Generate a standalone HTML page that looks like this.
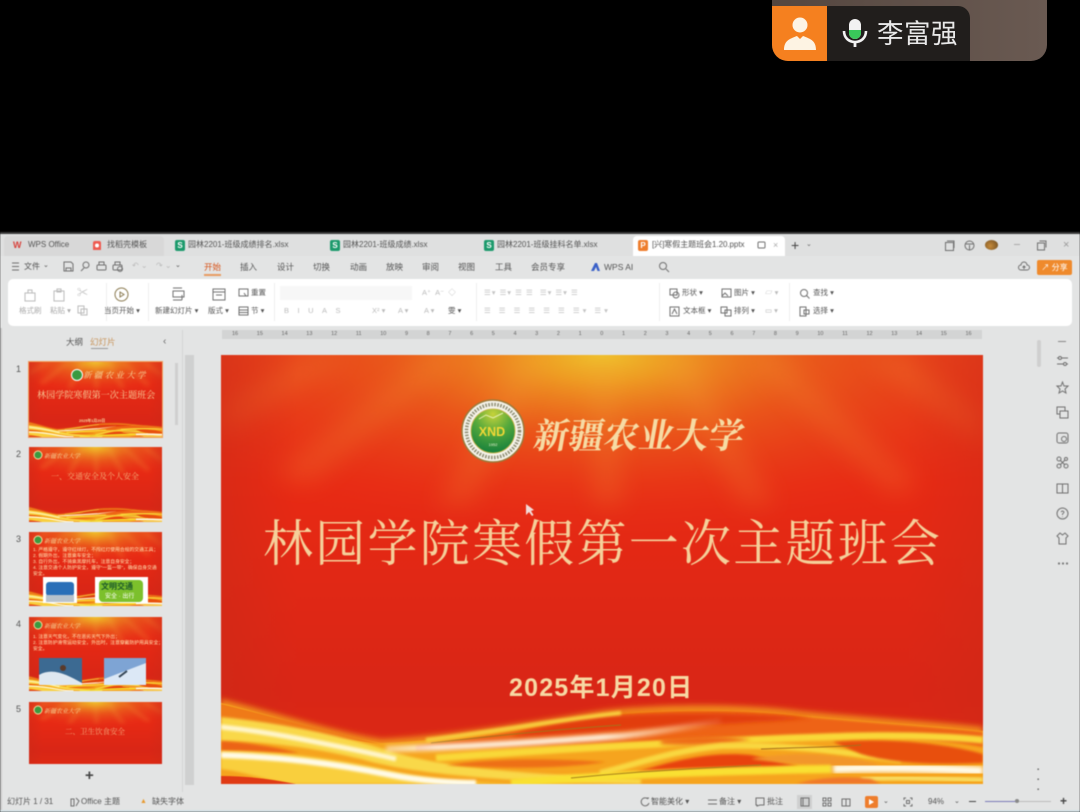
<!DOCTYPE html>
<html lang="zh"><head><meta charset="utf-8"><title>WPS 演示</title>
<style>
*{box-sizing:border-box}
html,body{margin:0;width:1080px;height:812px;overflow:hidden;background:#000;font-family:"Liberation Sans","Noto Sans CJK SC",sans-serif}
.a{position:absolute;white-space:nowrap}
#app{position:absolute;left:0;top:232px;width:1080px;height:580px;background:#e3e4e4;overflow:hidden}
#blur{position:absolute;left:0;top:0;width:1080px;height:812px;filter:blur(.6px)}
.t{font-size:8px;color:#555;line-height:10px}
.r{font-size:8px;color:#555;line-height:10px}
.d{font-size:7.5px;color:#aaa;line-height:10px}
.k{font-size:7.5px;color:#555;line-height:10px}
.ic{position:absolute;fill:none;stroke:#707070;stroke-width:1}
.ig{position:absolute;fill:none;stroke:#bbb;stroke-width:1}
.num{font-size:9px;color:#555}
.th{position:absolute;left:29px;width:133px}
.rul{font-size:5.5px;color:#666}
</style></head><body>
<svg width="0" height="0" style="position:absolute">
<defs>
<linearGradient id="bgv" x1="0" y1="0" x2="0" y2="1"><stop offset="0" stop-color="#e63c1a"/><stop offset=".3" stop-color="#e82a14"/><stop offset=".78" stop-color="#d92616"/><stop offset="1" stop-color="#dd2a14"/></linearGradient>
<radialGradient id="glow" cx=".5" cy="0" r=".62"><stop offset="0" stop-color="#efc02c"/><stop offset=".14" stop-color="#efa524" stop-opacity=".92"/><stop offset=".45" stop-color="#ec6a1c" stop-opacity=".6"/><stop offset="1" stop-color="#e8301a" stop-opacity="0"/></radialGradient>
<linearGradient id="edge" x1="0" y1="0" x2="1" y2="0"><stop offset="0" stop-color="#c92a18" stop-opacity=".45"/><stop offset=".1" stop-color="#c92a18" stop-opacity="0"/><stop offset=".9" stop-color="#c92a18" stop-opacity="0"/><stop offset="1" stop-color="#c92a18" stop-opacity=".35"/></linearGradient>
<radialGradient id="seal" cx=".5" cy=".12" r=".95"><stop offset="0" stop-color="#c6d23a"/><stop offset=".45" stop-color="#54a83c"/><stop offset="1" stop-color="#0c7a3c"/></radialGradient>
<linearGradient id="wfade" gradientUnits="userSpaceOnUse" x1="165" y1="0" x2="500" y2="0"><stop offset="0" stop-color="#fff" stop-opacity=".5"/><stop offset=".15" stop-color="#fffbe8"/><stop offset=".65" stop-color="#fffbe8"/><stop offset="1" stop-color="#ffd8a8" stop-opacity=".1"/></linearGradient>
<filter id="b3" x="-20%" y="-80%" width="140%" height="260%"><feGaussianBlur stdDeviation="3"/></filter>
<filter id="b2" x="-20%" y="-80%" width="140%" height="260%"><feGaussianBlur stdDeviation="2"/></filter>
<filter id="b1" x="-10%" y="-80%" width="120%" height="260%"><feGaussianBlur stdDeviation="1.2"/></filter>
<filter id="b8" x="-30%" y="-30%" width="160%" height="160%"><feGaussianBlur stdDeviation="12"/></filter>
<symbol id="bg" viewBox="0 0 762 429" preserveAspectRatio="none">
<rect width="762" height="429" fill="url(#bgv)"/>
<rect width="762" height="300" fill="url(#glow)"/>
<g filter="url(#b8)" fill="#f6b040" opacity=".17">
<polygon points="370,0 392,0 402,150 372,150"/>
<polygon points="300,0 325,0 250,150 215,150"/>
<polygon points="440,0 465,0 555,150 520,150"/>
<polygon points="210,0 240,0 90,130 50,120"/>
<polygon points="525,0 555,0 700,130 670,140"/>
<polygon points="90,0 130,0 0,80 0,50"/>
<polygon points="640,0 680,0 762,60 762,90"/>
</g>
<rect width="762" height="429" fill="url(#edge)"/>
</symbol>
<symbol id="wave" viewBox="0 0 762 429" preserveAspectRatio="none">
<path d="M0 344C50 356 110 376 160 384C210 382 280 372 379 356C430 349 520 348 579 356C650 363 720 367 762 372V429H0Z" fill="#f08a1a" filter="url(#b3)"/>
<path d="M0 348C50 360 110 380 160 388C210 387 280 376 379 360C430 354 520 352 579 360C650 367 720 371 762 376V429H0Z" fill="#f6a41e"/>
<path d="M0 349C50 361 110 378 160 389L0 368Z" fill="#ef7a18"/>
<path d="M195 391C280 380 340 366 379 361C430 355 520 353 579 361C650 368 720 372 762 377V392C700 380 600 380 546 383C450 386 300 392 195 395Z" fill="#ee6412" filter="url(#b1)"/>
<path d="M379 362C440 357 510 357 590 363C540 368 450 371 379 377C340 380 320 381 290 382C310 372 350 366 379 362Z" fill="#e23c0e" filter="url(#b2)"/>
<path d="M205 385C280 376 340 364 400 358" stroke="#f8d040" stroke-width="4" fill="none" filter="url(#b1)"/>
<path d="M210 388C280 380 340 374 400 370" stroke="#a8701a" stroke-width="1" fill="none"/>
<path d="M0 362C60 368 120 380 175 398C230 414 320 420 420 424V429C320 428 200 422 140 404C90 392 40 386 0 386Z" fill="#f9d848" filter="url(#b1)"/>
<path d="M0 372C40 376 70 382 110 390C130 394 150 398 175 404" stroke="#fff6cc" stroke-width="5" fill="none" filter="url(#b1)"/>
<path d="M0 386C30 388 55 392 78 398C40 398 20 396 0 396Z" fill="#ec6412" filter="url(#b1)"/>
<path d="M0 396C60 396 120 404 180 418C220 426 260 428 310 429H70C40 424 20 416 0 414Z" fill="#f9cf3c" filter="url(#b1)"/>
<path d="M0 400C60 402 110 408 170 420C200 426 235 428 255 428" stroke="#fffbe8" stroke-width="6" fill="none" filter="url(#b1)"/>
<path d="M0 421C25 421 50 424 75 429H0Z" fill="#e03a14"/>
<path d="M165 394C250 392 330 386 400 381C430 378 465 372 500 366" stroke="url(#wfade)" stroke-width="6" fill="none" filter="url(#b2)"/>
<path d="M215 403C300 397 400 390 546 384C620 381 690 378 762 385" stroke="#f9d838" stroke-width="7" fill="none" filter="url(#b1)"/>
<path d="M225 410C280 402 340 404 385 407C340 414 280 414 225 410Z" fill="#ee7012" filter="url(#b1)"/>
<path d="M440 384C480 379 510 381 530 385C490 391 470 391 440 389Z" fill="#ee6a14" filter="url(#b2)"/>
<path d="M379 418C420 408 450 396 500 391C570 389 620 397 680 405" stroke="#f9d840" stroke-width="6" fill="none" filter="url(#b1)"/>
<path d="M412 418C450 406 490 396 530 400C550 404 560 408 578 411C530 416 470 420 412 418Z" fill="#e8420f" filter="url(#b1)"/>
<path d="M612 387C660 383 720 387 762 399V408C710 410 670 408 640 399Z" fill="#e8500f" filter="url(#b1)"/>
<path d="M530 404C570 396 620 398 660 410C620 412 570 410 530 404Z" fill="#f2962a" filter="url(#b1)"/>
<path d="M290 428C390 420 480 416 610 414" stroke="#f9e030" stroke-width="8" fill="none" filter="url(#b1)"/>
<path d="M612 414C650 412 710 413 762 416" stroke="#fffbea" stroke-width="9" fill="none" filter="url(#b2)"/>
<path d="M640 424C680 422 720 424 762 425" stroke="#f8dc60" stroke-width="5" fill="none" filter="url(#b1)"/>
<path d="M575 429C590 424 620 420 650 424L660 429Z" fill="#f0762a" filter="url(#b1)"/>
<path d="M350 423C420 416 470 414 540 410" stroke="#a8801a" stroke-width="1" fill="none"/>
<path d="M540 394C590 392 620 392 640 390" stroke="#a8701a" stroke-width="1" fill="none"/>
</symbol>
</defs>
</svg>

<!-- Video call badge -->
<div class="a" style="left:772px;top:0;width:275px;height:61px;background:linear-gradient(90deg,#54463f,#6a5a52);border-radius:0 0 16px 16px"></div>
<div class="a" style="left:772px;top:6px;width:55px;height:55px;background:#f5801f;border-radius:0 0 0 16px"></div>
<div class="a" style="left:827px;top:6px;width:143px;height:55px;background:#211e1c;border-radius:0 12px 0 0"></div>
<svg class="a" style="left:783px;top:15px" width="34" height="36" viewBox="0 0 34 36"><circle cx="17" cy="10" r="7.5" fill="#fdf3e3"/><path d="M1 35C1 26 6 24 14 21L17 24L20 21C28 24 33 26 33 35Z" fill="#fdf3e3"/></svg>
<svg class="a" style="left:842px;top:18px" width="26" height="30" viewBox="0 0 26 30"><rect x="7" y="1" width="12" height="20" rx="6" fill="#f2f2f2"/><path d="M7 12H19V15A6 6 0 0 1 7 15Z" fill="#39c85a"/><path d="M2 13C2 20 7 24 13 24S24 20 24 13" fill="none" stroke="#f2f2f2" stroke-width="2.6"/><rect x="11.6" y="23" width="2.8" height="6" fill="#f2f2f2"/></svg>
<div class="a" style="left:877px;top:18px;font-size:26.5px;line-height:32px;color:#e9e9e9;font-family:'Liberation Sans','Noto Sans CJK SC',sans-serif;letter-spacing:.5px">李富强</div>

<div id="blur">
<div id="app" style="top:232px">
</div>
<!-- top edge and tab strip -->
<div class="a" style="left:0;top:232px;width:1080px;height:2px;background:#3a3a3a"></div>
<div class="a" style="left:0;top:234px;width:1080px;height:22px;background:#dfe0e0"></div>
<div class="a" style="left:4px;top:236px;width:160px;height:20px;background:#d8d8d8;border-radius:4px 4px 0 0"></div>
<div class="a" style="left:633px;top:236px;width:152px;height:20px;background:#fff;border-radius:4px 4px 0 0"></div>

<div class="a" style="left:13px;top:240px;font-size:9px;line-height:10px;font-weight:bold;color:#d8403a">W</div>
<div class="a t" style="left:28px;top:240px">WPS Office</div>
<svg class="a" style="left:92px;top:240px" width="10" height="11"><path d="M1 10V3Q1 1 3 1H7Q9 1 9 3V10Z" fill="#ee5a50"/><circle cx="5" cy="5.5" r="2" fill="#fff"/></svg>
<div class="a t" style="left:107px;top:240px">找稻壳模板</div>
<div class="a" style="left:175px;top:240px;width:10px;height:11px;background:#1c9a6c;border-radius:2px;color:#fff;font-size:8px;line-height:11px;text-align:center;font-weight:bold">S</div>
<div class="a t" style="left:188px;top:240px">园林2201-班级成绩排名.xlsx</div>
<div class="a" style="left:330px;top:240px;width:10px;height:11px;background:#1c9a6c;border-radius:2px;color:#fff;font-size:8px;line-height:11px;text-align:center;font-weight:bold">S</div>
<div class="a t" style="left:343px;top:240px">园林2201-班级成绩.xlsx</div>
<div class="a" style="left:484px;top:240px;width:10px;height:11px;background:#1c9a6c;border-radius:2px;color:#fff;font-size:8px;line-height:11px;text-align:center;font-weight:bold">S</div>
<div class="a t" style="left:497px;top:240px">园林2201-班级挂科名单.xlsx</div>
<div class="a" style="left:638px;top:240px;width:10px;height:11px;background:#ee7d2c;border-radius:2px;color:#fff;font-size:8px;line-height:11px;text-align:center;font-weight:bold">P</div>
<div class="a t" style="left:652px;top:240px;letter-spacing:-.05px">[兴]寒假主题班会1.20.pptx</div>
<svg class="ic" style="left:757px;top:241px" width="9" height="9"><rect x="1" y="1" width="7" height="6" rx="1"/></svg>
<div class="a" style="left:773px;top:240px;font-size:9px;line-height:10px;color:#aaa">×</div>
<div class="a" style="left:791px;top:238px;font-size:14px;line-height:15px;color:#444">+</div>
<div class="a" style="left:806px;top:240px;font-size:7px;line-height:10px;color:#666">⌄</div>
<svg class="ic" style="left:944px;top:240px" width="11" height="11"><rect x="1.5" y="2.5" width="8" height="8"/><path d="M3 1H10V8"/></svg>
<svg class="ic" style="left:964px;top:240px" width="11" height="11"><circle cx="5.5" cy="5.5" r="4.5"/><path d="M1 4H10M5.5 5V10"/></svg>
<div class="a" style="left:985px;top:240px;width:13px;height:10px;border-radius:50%;background:radial-gradient(circle at 40% 60%,#c58a3a,#6a4a22)"></div>
<div class="a" style="left:1014px;top:244px;width:6px;height:1px;background:#aaa"></div>
<svg class="ic" style="left:1036px;top:240px" width="11" height="11"><rect x="1.5" y="3" width="7" height="7"/><path d="M3.5 1H10V7.5"/></svg>
<div class="a" style="left:1063px;top:239px;font-size:11px;line-height:12px;color:#999">×</div>

<!-- ribbon tabs -->
<svg class="ic" style="left:12px;top:262px" width="8" height="9"><path d="M0 1H7M0 4.500H7M0 8H7"/></svg>
<div class="a r" style="left:24px;top:262px">文件</div><div class="a r" style="left:43px;top:261px;font-size:7px">⌄</div>
<svg class="ic" style="left:63px;top:261px" width="11" height="11"><path d="M1 1H8L10 3V10H1ZM3 10V7H8V10"/></svg>
<svg class="ic" style="left:80px;top:261px" width="11" height="11"><circle cx="6" cy="4" r="3"/><path d="M4 7L1 10"/></svg>
<svg class="ic" style="left:96px;top:261px" width="11" height="11"><rect x="1" y="4" width="9" height="5" rx="1"/><path d="M3 4V1H8V4M3 9H8"/></svg>
<svg class="ic" style="left:112px;top:261px" width="12" height="11"><rect x="1" y="4" width="9" height="5" rx="1"/><path d="M3 4V1H8V4"/><circle cx="8" cy="8" r="2.500"/></svg>
<div class="a" style="left:132px;top:261px;font-size:8px;line-height:10px;color:#bbb">↶ ⌄</div>
<div class="a" style="left:156px;top:261px;font-size:8px;line-height:10px;color:#bbb">↷ ⌄</div>
<div class="a r" style="left:175px;top:261px;font-size:7px">⌄</div>
<div class="a" style="left:204px;top:262px;font-size:8.500px;line-height:11px;color:#d8541a">开始</div>
<div class="a" style="left:204px;top:274px;width:17px;height:2px;background:#e89a60"></div>
<div class="a r" style="left:240px;top:262px;font-size:8.500px">插入</div>
<div class="a r" style="left:277px;top:262px;font-size:8.500px">设计</div>
<div class="a r" style="left:313px;top:262px;font-size:8.500px">切换</div>
<div class="a r" style="left:350px;top:262px;font-size:8.500px">动画</div>
<div class="a r" style="left:386px;top:262px;font-size:8.500px">放映</div>
<div class="a r" style="left:422px;top:262px;font-size:8.500px">审阅</div>
<div class="a r" style="left:458px;top:262px;font-size:8.500px">视图</div>
<div class="a r" style="left:495px;top:262px;font-size:8.500px">工具</div>
<div class="a r" style="left:531px;top:262px;font-size:8.500px">会员专享</div>
<svg class="a" style="left:591px;top:262px" width="10" height="10"><path d="M0 9L4 1H6L9 9H6.500L5 5L3 9Z" fill="#3a60c8"/></svg>
<div class="a r" style="left:604px;top:262px;font-size:8.500px">WPS AI</div>
<svg class="ic" style="left:658px;top:261px" width="12" height="12"><circle cx="5" cy="5" r="3.500"/><path d="M8 8L11 11"/></svg>
<svg class="ic" style="left:1018px;top:261px" width="12" height="11"><path d="M3 9A2.500 2.500 0 0 1 3 4A3 3 0 0 1 9 4A2.500 2.500 0 0 1 9 9ZM6 8V5M4.500 6.500L6 5L7.500 6.500"/></svg>
<div class="a" style="left:1037px;top:260px;width:35px;height:15px;background:#ef8a2c;border-radius:2px;color:#fff;font-size:8px;line-height:15px;text-align:center">↗ 分享</div>

<!-- ribbon -->
<div class="a" style="left:8px;top:279px;width:1064px;height:47px;background:#fff;border-radius:5px"></div>
<svg class="ig" style="left:23px;top:288px" width="14" height="14"><path d="M2 5H12V13H2ZM5 5V2H9V5"/></svg>
<svg class="ig" style="left:52px;top:288px" width="14" height="14"><path d="M2 3H12V13H2ZM5 1H9V4H5Z"/></svg>
<div class="a" style="left:77px;top:287px;font-size:11px;line-height:13px;color:#bbb">✂</div>
<div class="a d" style="left:19px;top:306px">格式刷</div><div class="a d" style="left:50px;top:306px">粘贴 ▾</div>
<svg class="ig" style="left:77px;top:305px" width="11" height="11"><rect x="1" y="1" width="6" height="7"/><rect x="4" y="4" width="6" height="6"/></svg>
<div class="a" style="left:106px;top:283px;width:1px;height:38px;background:#eee"></div>
<svg class="a" style="left:114px;top:287px;fill:none;stroke:#8a7a50;stroke-width:1" width="15" height="15"><circle cx="7.500" cy="7.500" r="6.500"/><path d="M6 5L10 7.500L6 10Z"/></svg>
<div class="a k" style="left:104px;top:306px">当页开始 ▾</div>
<div class="a" style="left:148px;top:283px;width:1px;height:38px;background:#eee"></div>
<svg class="ic" style="left:171px;top:287px" width="15" height="15"><path d="M2 1H11M2 4H13V10H2ZM2 13H11M11 8V13"/></svg>
<div class="a k" style="left:155px;top:306px">新建幻灯片 ▾</div>
<svg class="ic" style="left:212px;top:288px" width="14" height="13"><rect x="1" y="1" width="12" height="11"/><path d="M1 4H13M4 7H10"/></svg>
<div class="a k" style="left:208px;top:306px">版式 ▾</div>
<svg class="ic" style="left:238px;top:288px" width="11" height="10"><rect x="1" y="1" width="9" height="7"/><path d="M6 5L8 8"/></svg>
<div class="a k" style="left:251px;top:288px">重置</div>
<svg class="ic" style="left:238px;top:306px" width="11" height="10"><rect x="1" y="1" width="9" height="8"/><path d="M1 4H10M1 6.500H10"/></svg>
<div class="a k" style="left:251px;top:306px">节 ▾</div>
<div class="a" style="left:274px;top:283px;width:1px;height:38px;background:#eee"></div>
<div class="a" style="left:280px;top:286px;width:132px;height:14px;background:#f7f7f7"></div>
<div class="a d" style="left:422px;top:288px;color:#bbb">A⁺ &nbsp;A⁻ &nbsp;◇</div>
<div class="a d" style="left:284px;top:306px;color:#bbb;letter-spacing:8.500px">BIUAS</div>
<div class="a d" style="left:372px;top:306px;color:#bbb">X² ▾</div>
<div class="a d" style="left:398px;top:306px;color:#bbb">A ▾</div>
<div class="a d" style="left:424px;top:306px;color:#bbb">A ▾</div>
<div class="a k" style="left:448px;top:306px">雯 ▾</div>
<div class="a" style="left:476px;top:283px;width:1px;height:38px;background:#eee"></div>
<div class="a d" style="left:484px;top:288px;color:#c4c4c4;letter-spacing:1px">☰▾ ☰▾ ☰ ☰ &nbsp;☰▾ ☰▾ ☰</div>
<div class="a d" style="left:484px;top:306px;color:#c4c4c4;letter-spacing:3px">☰ ☰ ☰ ☰ ☰ ☰ ☰▾ ☰▾</div>
<div class="a" style="left:659px;top:283px;width:1px;height:38px;background:#eee"></div>
<svg class="ic" style="left:669px;top:288px" width="11" height="11"><rect x="1" y="1" width="7" height="6"/><circle cx="7" cy="7" r="3"/></svg>
<div class="a k" style="left:682px;top:288px">形状 ▾</div>
<svg class="ic" style="left:721px;top:288px" width="11" height="10"><rect x="1" y="1" width="9" height="8"/><path d="M1 8L4 5L7 8"/></svg>
<div class="a k" style="left:734px;top:288px">图片 ▾</div>
<div class="a d" style="left:765px;top:288px;color:#bbb">▱ ▾</div>
<svg class="ic" style="left:669px;top:306px" width="11" height="11"><rect x="1" y="1" width="9" height="9"/><path d="M3 8L5.500 3L8 8"/></svg>
<div class="a k" style="left:683px;top:306px">文本框 ▾</div>
<svg class="ic" style="left:720px;top:306px" width="12" height="11"><rect x="1" y="1" width="6" height="6"/><rect x="5" y="4" width="6" height="6"/></svg>
<div class="a k" style="left:734px;top:306px">排列 ▾</div>
<div class="a d" style="left:765px;top:306px;color:#bbb">▭ ▾</div>
<div class="a" style="left:789px;top:283px;width:1px;height:38px;background:#eee"></div>
<svg class="ic" style="left:799px;top:288px" width="11" height="11"><circle cx="5" cy="5" r="3.500"/><path d="M7.500 7.500L10.500 10.500"/></svg>
<div class="a k" style="left:813px;top:288px">查找 ▾</div>
<svg class="ic" style="left:799px;top:306px" width="11" height="11"><rect x="1" y="1" width="6" height="9"/><rect x="5" y="4" width="5" height="4"/></svg>
<div class="a k" style="left:813px;top:306px">选择 ▾</div>

<!-- horizontal ruler -->
<div class="a rul" style="left:222px;top:330px;width:760px;height:9px;background:#d3d4d4;display:flex;justify-content:space-between;padding:0 10px;line-height:9px">
<span>16</span><span>15</span><span>14</span><span>13</span><span>12</span><span>11</span><span>10</span><span>9</span><span>8</span><span>7</span><span>6</span><span>5</span><span>4</span><span>3</span><span>2</span><span>1</span><span>0</span><span>1</span><span>2</span><span>3</span><span>4</span><span>5</span><span>6</span><span>7</span><span>8</span><span>9</span><span>10</span><span>11</span><span>12</span><span>13</span><span>14</span><span>15</span><span>16</span>
</div>
<!-- left panel -->
<div class="a" style="left:182px;top:330px;width:1px;height:462px;background:#d4d5d5"></div>
<div class="a" style="left:0;top:328px;width:2px;height:484px;background:#c8c8c8"></div>
<div class="a r" style="left:66px;top:337px;font-size:8.500px">大纲</div>
<div class="a" style="left:90px;top:337px;font-size:8.500px;line-height:10px;color:#c8945a">幻灯片</div>
<div class="a" style="left:91px;top:348px;width:17px;height:1px;background:#999"></div>
<div class="a" style="left:163px;top:336px;font-size:10px;line-height:12px;color:#666">‹</div>
<div class="a" style="left:175px;top:363px;width:3px;height:62px;background:#cfcfcf"></div>
<div class="a" style="left:185px;top:355px;width:9px;height:430px;background:#cfd0d0"></div>
<div class="a num" style="left:16px;top:364px">1</div>
<div class="a num" style="left:16px;top:449px">2</div>
<div class="a num" style="left:16px;top:534px">3</div>
<div class="a num" style="left:16px;top:619px">4</div>
<div class="a num" style="left:16px;top:704px">5</div>

<!-- thumb 1 -->
<div class="a" style="left:28px;top:361px;width:135px;height:77px;border:1px solid #f0a060"></div>
<svg class="th" style="top:362px" width="133" height="75"><use href="#bg" width="133" height="75"/><use href="#wave" width="133" height="75"/>
<circle cx="48" cy="13" r="5.500" fill="#3a9a40" stroke="#fff"/>
<text x="54" y="16" font-size="8.500" fill="#f6dca0" font-family="Noto Serif CJK SC,serif" font-style="italic" letter-spacing="2.300">新疆农业大学</text>
<text x="8" y="36" font-size="9.100" fill="#f8d7a0" font-family="Noto Serif CJK SC,serif">林园学院寒假第一次主题班会</text>
<text x="50" y="60" font-size="3.800" font-weight="bold" fill="#f8d7a0">2025年1月20日</text></svg>
<!-- thumb 2 -->
<svg class="th" style="top:447px" width="133" height="75"><use href="#bg" width="133" height="75"/><use href="#wave" width="133" height="75"/>
<circle cx="9" cy="8" r="4" fill="#3a9a40" stroke="#f6dca0"/>
<text x="15" y="11" font-size="6" fill="#f6dca0" font-family="Noto Serif CJK SC,serif" font-style="italic">新疆农业大学</text>
<text x="22" y="32" font-size="8" fill="#f3b37a" font-family="Noto Serif CJK SC,serif">一、交通安全及个人安全</text></svg>
<!-- thumb 3 -->
<svg class="th" style="top:532px" width="133" height="74"><use href="#bg" width="133" height="74"/><use href="#wave" width="133" height="74"/>
<circle cx="9" cy="8" r="4" fill="#3a9a40" stroke="#f6dca0"/>
<text x="15" y="11" font-size="6" fill="#f6dca0" font-family="Noto Serif CJK SC,serif" font-style="italic">新疆农业大学</text>
<g font-size="4.800" fill="#ffe0b0">
<text x="4" y="19">1. 严格遵守，遵守红绿灯，不闯红灯使用合规的交通工具；</text>
<text x="4" y="25">2. 假期外出，注意乘车安全；</text>
<text x="4" y="31">3. 自行外出，不骑乘黑摩托车，注意自身安全；</text>
<text x="4" y="37">4. 注意交通个人防护安全，遵守“一盔一带”，确保自身交通</text>
<text x="4" y="43">安全。</text></g>
<rect x="14" y="45" width="34" height="26" fill="#fff"/><rect x="17" y="50" width="28" height="14" rx="3" fill="#2a6fb8"/><rect x="17" y="63" width="28" height="7" fill="#b8c2cc"/>
<rect x="66" y="45" width="53" height="26" fill="#fff"/><rect x="70" y="48" width="44" height="22" rx="4" fill="#7cc02c"/><text x="72" y="57" font-size="8" font-weight="bold" fill="#1c5a2a">文明交通</text><text x="76" y="66" font-size="6" fill="#fff">安全 · 出行</text></svg>
<!-- thumb 4 -->
<svg class="th" style="top:617px" width="133" height="74"><use href="#bg" width="133" height="74"/><use href="#wave" width="133" height="74"/>
<circle cx="9" cy="8" r="4" fill="#3a9a40" stroke="#f6dca0"/>
<text x="15" y="11" font-size="6" fill="#f6dca0" font-family="Noto Serif CJK SC,serif" font-style="italic">新疆农业大学</text>
<g font-size="4.800" fill="#ffe0b0">
<text x="4" y="21">1. 注意天气变化，不在恶劣天气下外出；</text>
<text x="4" y="27">2. 注意防护滑雪运动安全，外出时，注意穿戴防护用具安全；</text>
<text x="4" y="33">安全。</text></g>
<rect x="10" y="41" width="43" height="27" fill="#3c6a92"/><path d="M10 68V58C24 50 38 58 53 66V68Z" fill="#dfe8f0"/><circle cx="34" cy="51" r="3" fill="#5a3a2a"/>
<rect x="75" y="41" width="42" height="27" fill="#7ea4d4"/><path d="M75 62L117 46V68H75Z" fill="#dce8f6"/><path d="M90 60L98 54" stroke="#345" stroke-width="2"/></svg>
<!-- thumb 5 -->
<svg class="th" style="top:702px" width="133" height="62" preserveAspectRatio="none"><use href="#bg" width="133" height="62"/>
<circle cx="9" cy="8" r="4" fill="#3a9a40" stroke="#f6dca0"/>
<text x="15" y="11" font-size="6" fill="#f6dca0" font-family="Noto Serif CJK SC,serif" font-style="italic">新疆农业大学</text>
<text x="36" y="32" font-size="7.500" fill="#f3a87a" font-family="Noto Serif CJK SC,serif">二、卫生饮食安全</text></svg>
<div class="a" style="left:85px;top:768px;font-size:15px;line-height:16px;color:#444;font-weight:bold">+</div>

<!-- main slide -->
<svg class="a" style="left:221px;top:355px" width="762" height="429" viewBox="0 0 762 429"><use href="#bg" width="762" height="429"/><use href="#wave" width="762" height="429"/>
<circle cx="272" cy="76" r="31" fill="#f5f3ea" stroke="#9a7a3a" stroke-width="1.500"/>
<circle cx="272" cy="76" r="26.500" fill="none" stroke="#6a6a4a" stroke-width="3.500" stroke-dasharray="1.500 1.500" opacity=".75"/>
<circle cx="272" cy="76" r="22" fill="url(#seal)" stroke="#c8b040" stroke-width=".8"/>
<path d="M258 64L265 60L272 63L282 58" fill="none" stroke="#e8f0b0" stroke-width="1"/>
<text x="271" y="81" font-size="12.500" font-weight="bold" fill="#f2d836" text-anchor="middle">XND</text>
<text x="272" y="91" font-size="4" fill="#e8f0d0" text-anchor="middle">1952</text>
<text x="311" y="93" font-size="35" font-weight="bold" fill="#f6dba4" font-family="Noto Serif CJK SC,serif" transform="skewX(-10) translate(16.500 0)">新疆农业大学</text>
<text x="42" y="206" font-size="50" fill="#f5d09a" font-family="Noto Serif CJK SC,serif" letter-spacing="2.250">林园学院寒假第一次主题班会</text>
<text x="288" y="341" font-size="25" font-weight="bold" fill="#f7d9a4" font-family="Liberation Sans,Noto Sans CJK SC,sans-serif" letter-spacing="1.200">2025年1月20日</text>
<path d="M305 149L305 160L308 157L311 161L312.500 160L310 156L313 155Z" fill="#f2dcd8"/>
</svg>

<!-- v scrollbar -->
<div class="a" style="left:1037px;top:340px;width:4px;height:27px;background:#cfcfcf;border-radius:2px"></div>
<!-- sidebar icons -->
<div class="a" style="left:1058px;top:341px;width:8px;height:1px;background:#888"></div>
<svg class="ic" style="left:1056px;top:355px" width="13" height="13"><path d="M1 3H12M1 9H12"/><circle cx="4" cy="3" r="1.500" fill="#e3e4e4"/><circle cx="9" cy="9" r="1.500" fill="#e3e4e4"/></svg>
<svg class="ic" style="left:1056px;top:381px" width="13" height="13"><path d="M6.500 1L8 5H12L9 8L10 12L6.500 10L3 12L4 8L1 5H5Z"/></svg>
<svg class="ic" style="left:1056px;top:406px" width="13" height="13"><rect x="1" y="1" width="8" height="7"/><rect x="4" y="5" width="8" height="7" fill="#e3e4e4"/></svg>
<svg class="ic" style="left:1056px;top:432px" width="13" height="13"><rect x="1" y="1" width="11" height="10" rx="2"/><circle cx="8" cy="7" r="2.500"/></svg>
<svg class="ic" style="left:1056px;top:456px" width="13" height="13"><circle cx="3" cy="3" r="2"/><circle cx="10" cy="3" r="1.500"/><circle cx="3" cy="10" r="2"/><circle cx="10" cy="10" r="2"/><path d="M4 4L9 9M9 4L4 9"/></svg>
<svg class="ic" style="left:1056px;top:482px" width="13" height="13"><rect x="1" y="2" width="11" height="9"/><path d="M6.500 2V11"/></svg>
<svg class="ic" style="left:1056px;top:507px" width="13" height="13"><circle cx="6.500" cy="6.500" r="5.500"/><path d="M5 5Q6.500 3 8 5Q8 6 6.500 7V8M6.500 9.500V10"/></svg>
<svg class="ic" style="left:1056px;top:532px" width="13" height="13"><path d="M4 1L1 4L3 6V12H10V6L12 4L9 1L6.500 3Z"/></svg>
<svg class="a" style="left:1057px;top:561px" width="12" height="5"><circle cx="2" cy="2.500" r="1.100" fill="#777"/><circle cx="6" cy="2.500" r="1.100" fill="#777"/><circle cx="10" cy="2.500" r="1.100" fill="#777"/></svg>
<div class="a" style="left:1037px;top:765px;font-size:6px;line-height:10px;color:#666;text-align:center">▪<br>▪<br>▪</div>

<!-- status bar -->
<div class="a" style="left:0;top:810px;width:1080px;height:2px;background:#d3e0e4"></div>
<div class="a r" style="left:7px;top:797px">幻灯片 1 / 31</div>
<svg class="ic" style="left:70px;top:797px" width="10" height="10"><path d="M1 2H4V9H1ZM6 1L9 4L6 9"/></svg>
<div class="a r" style="left:81px;top:797px">Office 主题</div>
<div class="a" style="left:140px;top:797px;font-size:7px;line-height:10px;color:#e89a30">▲</div>
<div class="a r" style="left:152px;top:797px">缺失字体</div>
<svg class="ic" style="left:640px;top:797px" width="10" height="10"><path d="M8 2A4 4 0 1 0 9 6M6 1H9"/></svg>
<div class="a r" style="left:651px;top:797px">智能美化 ▾</div>
<svg class="ic" style="left:708px;top:798px" width="9" height="8"><path d="M0 2H9M0 6H9"/></svg>
<div class="a r" style="left:719px;top:797px">备注 ▾</div>
<svg class="ic" style="left:755px;top:797px" width="10" height="10"><path d="M1 1H9V8H5L2 9V8H1Z"/></svg>
<div class="a r" style="left:767px;top:797px">批注</div>
<div class="a" style="left:797px;top:795px;width:15px;height:14px;background:#cfd0d0"></div>
<svg class="ic" style="left:800px;top:797px" width="10" height="10"><rect x="1" y="1" width="8" height="8"/><path d="M3 1V9"/></svg>
<svg class="ic" style="left:822px;top:797px" width="10" height="10"><rect x="1" y="1" width="3" height="3"/><rect x="6" y="1" width="3" height="3"/><rect x="1" y="6" width="3" height="3"/><rect x="6" y="6" width="3" height="3"/></svg>
<svg class="ic" style="left:841px;top:797px" width="10" height="10"><path d="M1 2H5V9H1ZM5 2H9V9H5Z"/></svg>
<div class="a" style="left:865px;top:796px;width:13px;height:12px;background:#ee7d2c;border-radius:2px"></div>
<svg class="a" style="left:869px;top:799px" width="5" height="6"><path d="M0 0L5 3L0 6Z" fill="#fff"/></svg>
<div class="a r" style="left:883px;top:797px;font-size:7px">⌄</div>
<svg class="ic" style="left:903px;top:797px" width="10" height="10"><path d="M1 3V1H3M7 1H9V3M9 7V9H7M3 9H1V7"/><rect x="3.500" y="3.500" width="3" height="3"/></svg>
<div class="a r" style="left:928px;top:797px">94%</div>
<div class="a r" style="left:954px;top:797px;font-size:7px">⌄</div>
<div class="a" style="left:969px;top:801px;width:7px;height:1px;background:#444"></div>
<div class="a" style="left:985px;top:801px;width:30px;height:1px;background:#7a7ab8"></div>
<div class="a" style="left:1015px;top:801px;width:36px;height:1px;background:#bbb"></div>
<div class="a" style="left:1015px;top:799px;width:4px;height:4px;background:#888;border-radius:50%"></div>
<div class="a" style="left:1060px;top:795px;font-size:12px;line-height:13px;color:#444;font-weight:bold">+</div>
</div>
</body></html>
